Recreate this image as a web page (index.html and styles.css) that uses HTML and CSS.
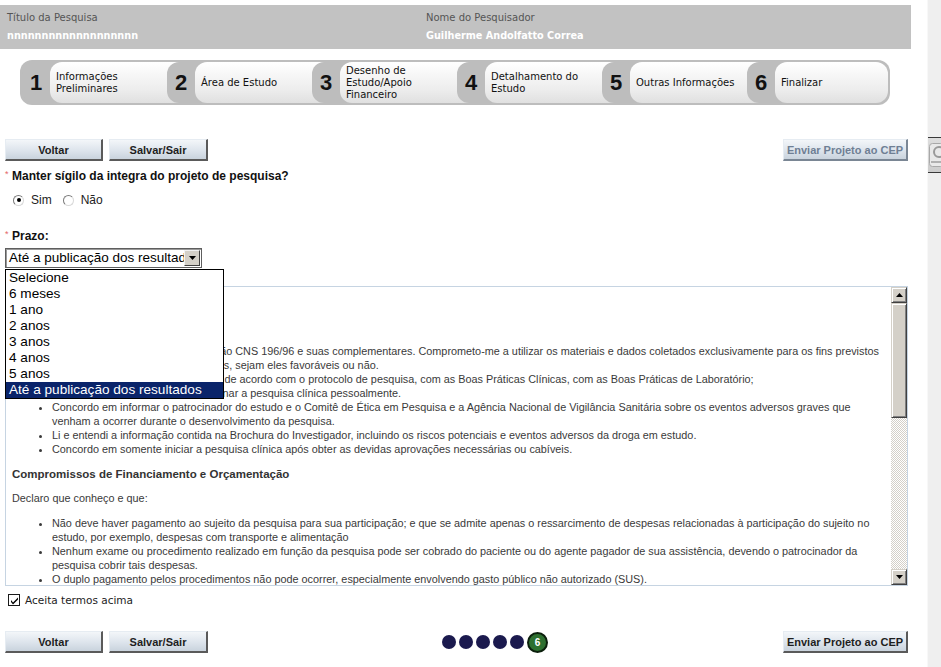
FILE: index.html
```html
<!DOCTYPE html>
<html lang="pt-BR">
<head>
<meta charset="utf-8">
<title>Plataforma Brasil - Finalizar</title>
<link rel="stylesheet" href="styles.css">
</head>
<body>
<div class="page">
  <header class="info-bar">
    <div class="info-col">
      <div class="info-label">Título da Pesquisa</div>
      <div class="info-value">nnnnnnnnnnnnnnnnnnn</div>
    </div>
    <div class="info-col">
      <div class="info-label">Nome do Pesquisador</div>
      <div class="info-value">Guilherme Andolfatto Correa</div>
    </div>
  </header>

  <nav class="steps">
    <div class="step"><div class="step-num">1</div><div class="step-label">Informações<br>Preliminares</div></div>
    <div class="step"><div class="step-num">2</div><div class="step-label">Área de Estudo</div></div>
    <div class="step"><div class="step-num">3</div><div class="step-label">Desenho de<br>Estudo/Apoio<br>Financeiro</div></div>
    <div class="step"><div class="step-num">4</div><div class="step-label">Detalhamento do<br>Estudo</div></div>
    <div class="step"><div class="step-num">5</div><div class="step-label">Outras Informações</div></div>
    <div class="step"><div class="step-num">6</div><div class="step-label">Finalizar</div></div>
  </nav>

  <main class="content">
    <div class="toolbar toolbar-top">
      <button class="btn btn-back">Voltar</button>
      <button class="btn btn-save">Salvar/Sair</button>
      <button class="btn btn-send btn-disabled">Enviar Projeto ao CEP</button>
    </div>

    <div class="field-label"><span class="req">*</span>Manter sígilo da integra do projeto de pesquisa?</div>
    <div class="radio-row">
      <span class="radio checked"></span><span class="radio-text">Sim</span>
      <span class="radio"></span><span class="radio-text">Não</span>
    </div>

    <div class="field-label field-prazo"><span class="req">*</span>Prazo:</div>
    <div class="select">
      <div class="select-box">
        <span class="select-value">Até a publicação dos resultados</span>
        <span class="select-arrow"><svg width="7" height="4" viewBox="0 0 7 4"><path d="M0 0h7L3.5 4z" fill="#000"/></svg></span>
      </div>
      <ul class="select-list">
        <li>Selecione</li>
        <li>6 meses</li>
        <li>1 ano</li>
        <li>2 anos</li>
        <li>3 anos</li>
        <li>4 anos</li>
        <li>5 anos</li>
        <li class="selected">Até a publicação dos resultados</li>
      </ul>
    </div>

    <div class="terms">
      <div class="terms-content">
        <h4>Compromissos do Pesquisador</h4>
        <p>Declaro que:</p>
        <ul>
          <li>Cumprirei os requisitos da Resolução CNS 196/96 e suas complementares. Comprometo-me a utilizar os materiais e dados coletados exclusivamente para os fins previstos<br>no protocolo e publicar os resultados, sejam eles favoráveis ou não.</li>
          <li>Conduzirei o estudo clínico sempre de acordo com o protocolo de pesquisa, com as Boas Práticas Clínicas, com as Boas Práticas de Laboratório;</li>
          <li>Declaro ter as condições de coordenar a pesquisa clínica pessoalmente.</li>
          <li>Concordo em informar o patrocinador do estudo e o Comitê de Ética em Pesquisa e a Agência Nacional de Vigilância Sanitária sobre os eventos adversos graves que<br>venham a ocorrer durante o desenvolvimento da pesquisa.</li>
          <li>Li e entendi a informação contida na Brochura do Investigador, incluindo os riscos potenciais e eventos adversos da droga em estudo.</li>
          <li>Concordo em somente iniciar a pesquisa clínica após obter as devidas aprovações necessárias ou cabíveis.</li>
        </ul>
        <h4>Compromissos de Financiamento e Orçamentação</h4>
        <p>Declaro que conheço e que:</p>
        <ul>
          <li>Não deve haver pagamento ao sujeito da pesquisa para sua participação; e que se admite apenas o ressarcimento de despesas relacionadas à participação do sujeito no<br>estudo, por exemplo, despesas com transporte e alimentação</li>
          <li>Nenhum exame ou procedimento realizado em função da pesquisa pode ser cobrado do paciente ou do agente pagador de sua assistência, devendo o patrocinador da<br>pesquisa cobrir tais despesas.</li>
          <li>O duplo pagamento pelos procedimentos não pode ocorrer, especialmente envolvendo gasto público não autorizado (SUS).</li>
        </ul>
      </div>
      <div class="scrollbar">
        <div class="sb-btn"><svg width="7" height="4" viewBox="0 0 7 4"><path d="M0 4h7L3.5 0z" fill="#000"/></svg></div>
        <div class="sb-thumb"></div>
        <div class="sb-track"></div>
        <div class="sb-btn"><svg width="7" height="4" viewBox="0 0 7 4"><path d="M0 0h7L3.5 4z" fill="#000"/></svg></div>
      </div>
    </div>

    <label class="accept">
      <span class="checkbox"><svg width="9" height="9" viewBox="0 0 9 9"><path d="M1 4l2 2.5L8 1.5v2L3 8.5 1 6z" fill="#000"/></svg></span>
      Aceita termos acima
    </label>

    <div class="toolbar toolbar-bottom">
      <button class="btn btn-back">Voltar</button>
      <button class="btn btn-save">Salvar/Sair</button>
      <div class="pager">
        <span class="dot"></span><span class="dot"></span><span class="dot"></span><span class="dot"></span><span class="dot"></span>
        <span class="dot-current">6</span>
      </div>
      <button class="btn btn-send">Enviar Projeto ao CEP</button>
    </div>
  </main>
</div>

<aside class="side-strip">
  <div class="side-tab">
    <svg width="13" height="30" viewBox="0 0 13 30"><rect x="0.5" y="3.5" width="14" height="23" rx="3" fill="#e9e9e9" stroke="#a8a8a8"/><circle cx="10" cy="12" r="5" fill="none" stroke="#9a9a9a" stroke-width="2"/><path d="M2 22h11" stroke="#b0b0b0" stroke-width="2"/></svg>
  </div>
</aside>
</body>
</html>
```

FILE: styles.css
```css
* { box-sizing: border-box; }

body {
  margin: 0;
  display: flex;
  min-height: 667px;
  background: #fff;
  font-family: "Liberation Sans", Arial, sans-serif;
  color: #000;
}

.page {
  width: 911px;
  flex: none;
  padding-top: 5px;
}

/* ---------- header info ---------- */
.info-bar {
  background: #c2c2c2;
  display: grid;
  grid-template-columns: 419px 1fr;
  padding: 7px 0 7px 7px;
  font-family: "DejaVu Sans", Verdana, sans-serif;
}
.info-label {
  font-size: 10px;
  line-height: 12px;
  color: #555;
}
.info-value {
  margin-top: 6px;
  font-size: 9.7px;
  line-height: 12px;
  font-weight: bold;
  color: #fff;
}

/* ---------- steps ---------- */
.steps {
  margin: 11px 0 0 20px;
  width: 870px;
  height: 45px;
  padding: 2px;
  background: #bdbdbd;
  border-radius: 12px;
  display: flex;
  overflow: hidden;
}
.step {
  display: flex;
  width: 145px;
  flex: none;
}
.step:last-child {
  flex: 1;
  width: auto;
}
.step-num {
  width: 28px;
  flex: none;
  background: #bdbdbd;
  border-radius: 12px 0 0 12px;
  text-align: center;
  font: bold 22px/41px "Liberation Sans", Arial, sans-serif;
  color: #111;
}
.step-label {
  flex: 1;
  margin-right: -12px;
  padding: 0 12px 0 6px;
  border-radius: 12px 0 0 12px;
  background: linear-gradient(#ffffff, #ececec 70%, #e0e0e0);
  display: flex;
  align-items: center;
  font: 10px/12px "DejaVu Sans", Verdana, sans-serif;
  color: #111;
}
.step:last-child .step-label {
  margin-right: 0;
  padding-right: 6px;
  border-radius: 12px;
}

/* ---------- content ---------- */
.content {
  padding: 0 3px 0 5px;
}

.toolbar {
  display: flex;
  align-items: center;
  gap: 6px;
}
.toolbar-top { margin-top: 34px; }
.toolbar-bottom { margin-top: 24px; }

.btn {
  height: 22px;
  padding: 0;
  background: linear-gradient(#f3f6f9, #dde4ec 55%, #c9d3dd);
  border: 1px solid #e6ecf2;
  border-right: 2px solid #5a5a5a;
  border-bottom: 2px solid #5a5a5a;
  font: bold 11px/18px "Liberation Sans", Arial, sans-serif;
  color: #1e1e1e;
  text-align: center;
}
.btn-back { width: 98px; }
.btn-save { width: 99px; }
.btn-send {
  width: 125px;
  margin-left: auto;
}
.btn-disabled {
  color: #6f7f94;
  border-right-color: #7a8694;
  border-bottom-color: #7a8694;
}

.field-label {
  margin-top: 8px;
  font: bold 12px/14px "Liberation Sans", Arial, sans-serif;
  color: #111;
}
.field-prazo { margin-top: 22px; }
.req {
  display: inline-block;
  width: 7px;
  color: #e36565;
  font-size: 9px;
  font-weight: normal;
  vertical-align: top;
  line-height: 10px;
}

.radio-row {
  margin-top: 10px;
  padding-left: 8px;
  display: flex;
  align-items: center;
  height: 14px;
  font-size: 12px;
  color: #222;
}
.radio {
  width: 11px;
  height: 11px;
  border-radius: 50%;
  border: 1px solid #7a7a7a;
  border-right-color: #d8d8d8;
  border-bottom-color: #d8d8d8;
  background: #fff;
  display: flex;
  align-items: center;
  justify-content: center;
  margin-right: 7px;
}
.radio.checked::after {
  content: "";
  width: 4px;
  height: 4px;
  border-radius: 50%;
  background: #000;
}
.radio-text { margin-right: 11px; }

/* ---------- fake select ---------- */
.select {
  position: relative;
  margin-top: 5px;
  width: 197px;
  z-index: 2;
}
.select-box {
  height: 20px;
  border: 1px solid #5e5e5e;
  box-shadow: inset 1px 1px #9a9a9a;
  background: #fff;
  display: flex;
  align-items: center;
  overflow: hidden;
}
.select-value {
  flex: 1;
  padding-left: 3px;
  font-size: 13.5px;
  line-height: 18px;
  white-space: nowrap;
  overflow: hidden;
  color: #000;
}
.select-arrow {
  width: 16px;
  height: 16px;
  margin-right: 1px;
  flex: none;
  background: #d4d0c8;
  border: 1px solid;
  border-color: #f2f2f2 #404040 #404040 #f2f2f2;
  display: flex;
  align-items: center;
  justify-content: center;
}
.select-list {
  position: absolute;
  top: 21px;
  left: 0;
  width: 219px;
  margin: 0;
  padding: 0;
  list-style: none;
  background: #fff;
  border: 1px solid #000;
}
.select-list li {
  height: 16px;
  padding-left: 3px;
  font-size: 13.6px;
  line-height: 16px;
  white-space: nowrap;
  color: #000;
}
.select-list li.selected {
  background: #0a246a;
  color: #fff;
}

/* ---------- terms box ---------- */
.terms {
  margin-top: 18px;
  height: 300px;
  border: 1px solid #c6d4e2;
  display: flex;
  overflow: hidden;
}
.terms-content {
  flex: 1;
  overflow: hidden;
  padding: 8px 0 0 6px;
  font-size: 10.85px;
  line-height: 14px;
  color: #3a3a3a;
}
.terms-content h4 {
  margin: 0 0 10px;
  font-size: 11.5px;
  line-height: 14px;
  font-weight: bold;
  color: #333;
}
.terms-content p {
  margin: 0 0 11px;
}
.terms-content ul {
  margin: 0 0 11px;
  padding-left: 40px;
}
.terms-content li {
  white-space: nowrap;
}

.scrollbar {
  width: 16px;
  flex: none;
  display: flex;
  flex-direction: column;
}
.sb-btn,
.sb-thumb {
  background: #d4d0c8;
  border: 1px solid;
  border-color: #d4d0c8 #404040 #404040 #d4d0c8;
  box-shadow: inset 1px 1px #fff, inset -1px -1px #808080;
}
.sb-btn {
  height: 16px;
  display: flex;
  align-items: center;
  justify-content: center;
}
.sb-thumb { height: 115px; }
.sb-track {
  flex: 1;
  background-color: #fff;
  background-image: repeating-conic-gradient(#d4d0c8 0 25%, #ffffff 0 50%);
  background-size: 2px 2px;
}

/* ---------- accept ---------- */
.accept {
  margin-top: 7px;
  height: 14px;
  padding-left: 3px;
  display: flex;
  align-items: center;
  gap: 5px;
  font: 10.5px/14px "DejaVu Sans", Verdana, sans-serif;
  color: #222;
}
.checkbox {
  width: 12px;
  height: 12px;
  border: 1px solid #1a1a1a;
  background: #fff;
  display: flex;
  align-items: center;
  justify-content: center;
}

/* ---------- pager ---------- */
.pager {
  margin-left: 228px;
  display: flex;
  align-items: center;
  gap: 3px;
}
.dot {
  width: 14px;
  height: 14px;
  border-radius: 50%;
  background: #1b1a4e;
}
.dot-current {
  width: 21px;
  height: 21px;
  border-radius: 50%;
  background: #2e7030;
  border: 2px solid #0b1f0c;
  color: #fff;
  font: bold 10px/17px "Liberation Sans", Arial, sans-serif;
  text-align: center;
}

/* ---------- side strip ---------- */
.side-strip {
  flex: 1;
  margin-left: 16px;
  background: #efefef;
  border-left: 1px solid #f8f8f8;
  padding-top: 137px;
}
.side-tab {
  height: 36px;
  border-top: 1px solid #3a3a3a;
  border-bottom: 1px solid #3a3a3a;
  background: linear-gradient(#dedede, #cdcdcd);
  display: flex;
  align-items: center;
  padding-left: 1px;
}
```
